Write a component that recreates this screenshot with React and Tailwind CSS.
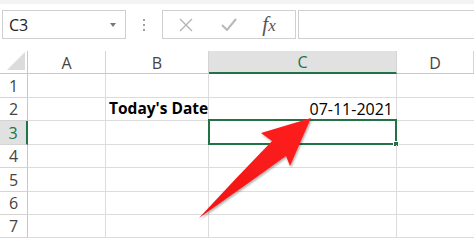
import React from "react";

const font = { fontFamily: '"Open Sans", "Liberation Sans", sans-serif' };

function HeaderCell({ w, label, selected }) {
  return (
    <div
      className={`h-full flex items-center justify-center border-r border-[#d4d4d4] text-[16px] ${
        selected ? "bg-[#e1e1e1] text-[#217346] border-b-2 border-b-[#217346]" : "text-[#444] border-b border-b-[#c8c8c8]"
      } ${w}`}
    >
      <span className="mt-[1px]">{label}</span>
    </div>
  );
}

const rows = [
  { n: 1, h: "h-[24px]" },
  { n: 2, h: "h-[23px]" },
  { n: 3, h: "h-[24px]" },
  { n: 4, h: "h-[23px]" },
  { n: 5, h: "h-[24px]" },
  { n: 6, h: "h-[23px]" },
  { n: 7, h: "h-[23px]" },
];

export default function App() {
  return (
    <div className="relative w-[474px] h-[240px] overflow-hidden bg-white" style={font}>
      {/* top strip */}
      <div className="h-[4px] bg-[#f3f3f3]" />
      <div className="h-[6px]" />
      {/* formula toolbar */}
      <div className="flex items-stretch h-[29px]">
        <div className="ml-[2px] w-[124px] border border-[#d0d0d0] flex items-center justify-between pl-[6px] pr-[9px]">
          <span className="text-[16px] text-[#222]">C3</span>
          <svg width="6" height="4" viewBox="0 0 6 4"><path d="M0 0 L6 0 L3 4 Z" fill="#777" /></svg>
        </div>
        <div className="w-[36px] flex flex-col items-center justify-center gap-[3px]">
          <div className="w-[2px] h-[2px] bg-[#a0a0a0]" />
          <div className="w-[2px] h-[2px] bg-[#a0a0a0]" />
          <div className="w-[2px] h-[2px] bg-[#a0a0a0]" />
        </div>
        <div className="w-[134px] border border-[#d0d0d0] flex items-center">
          <div className="w-[46px] flex justify-center">
            <svg width="14" height="14" viewBox="0 0 14 14"><path d="M1 1 L13 13 M13 1 L1 13" stroke="#b4b4b4" strokeWidth="1.4" /></svg>
          </div>
          <div className="w-[40px] flex justify-center">
            <svg width="16" height="13" viewBox="0 0 16 13"><path d="M1 7 L6 12 L15 1" stroke="#b8b8b8" strokeWidth="2" fill="none" /></svg>
          </div>
          <div className="flex-1 flex justify-center pr-[6px]">
            <span className="italic text-[21px] text-[#555] leading-none" style={{ fontFamily: '"Liberation Serif", serif' }}>
              f<span className="text-[17px]">x</span>
            </span>
          </div>
        </div>
        <div className="ml-[2px] flex-1 border-y border-l border-[#d0d0d0]" />
      </div>
      <div className="h-[12px]" />
      {/* column headers */}
      <div className="flex h-[23px]">
        <div className="w-[28px] h-full border-r border-b border-[#c8c8c8] relative flex items-end justify-end pr-[2px] pb-[3px]">
          <svg width="18" height="18" viewBox="0 0 18 18"><path d="M18 0 L18 18 L0 18 Z" fill="#dcdcdc" /></svg>
        </div>
        <HeaderCell w="w-[78px]" label="A" />
        <HeaderCell w="w-[103px]" label="B" />
        <HeaderCell w="w-[188px]" label="C" selected />
        <HeaderCell w="flex-1" label="D" />
      </div>
      {/* rows */}
      {rows.map((r) => (
        <div key={r.n} className={`flex ${r.h}`}>
          <div
            className={`w-[28px] h-full flex items-center justify-center text-[16px] border-b border-[#d4d4d4] ${
              r.n === 3 ? "bg-[#e1e1e1] text-[#217346] border-r-2 border-r-[#217346]" : "text-[#444] border-r border-r-[#c8c8c8]"
            }`}
          >
            {r.n}
          </div>
          <div className="w-[78px] h-full border-r border-b border-[#dcdcdc]" />
          <div className="w-[103px] h-full border-r border-b border-[#dcdcdc] flex items-center pl-[3px]">
            {r.n === 2 && <span className="font-bold text-[15.5px] text-black whitespace-nowrap">Today's Date</span>}
          </div>
          <div className="relative w-[188px] h-full border-r border-b border-[#dcdcdc] flex items-center justify-end pr-[3px]">
            {r.n === 2 && <span className="text-[16px] text-black">07-11-2021</span>}
            {r.n === 3 && (
              <div className="absolute left-[-1px] top-[-2px] right-[-1px] bottom-[-1px] border-2 border-[#217346]">
                <div className="absolute right-[-4px] bottom-[-4px] w-[6px] h-[6px] bg-[#217346] border border-white" />
              </div>
            )}
          </div>
          <div className="flex-1 h-full border-b border-[#dcdcdc]" />
        </div>
      ))}
      {/* arrow overlay */}
      <svg className="absolute inset-0 pointer-events-none" width="474" height="240" viewBox="0 0 474 240">
        <defs>
          <filter id="sh" x="-20%" y="-20%" width="140%" height="140%">
            <feDropShadow dx="1" dy="1.5" stdDeviation="1.2" floodColor="#000" floodOpacity="0.35" />
          </filter>
          <linearGradient id="rg" x1="0" y1="1" x2="1" y2="0">
            <stop offset="0" stopColor="#f01515" />
            <stop offset="1" stopColor="#ff1f1f" />
          </linearGradient>
        </defs>
        <path
          d="M199 218 Q 235 179 272 141 L 261 133 L 311 118 L 290 166 L 286 156 Q 243 187 199 218 Z"
          fill="url(#rg)"
          filter="url(#sh)"
        />
      </svg>
    </div>
  );
}
